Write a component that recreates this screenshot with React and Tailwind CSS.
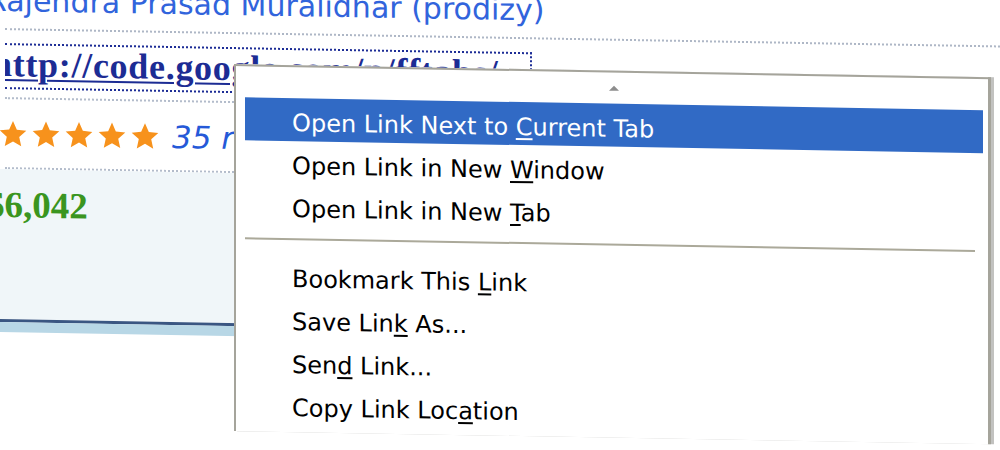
import React from "react";

function Star() {
  return (
    <svg width="28" height="27" viewBox="0 0 24 23" className="shrink-0">
      <polygon
        points="12,0.5 15.29,7.97 23.41,8.79 17.33,14.23 19.05,22.21 12,18.1 4.95,22.21 6.67,14.23 0.59,8.79 8.71,7.97"
        fill="#f7921c"
      />
    </svg>
  );
}

function Item({ children, active }) {
  return (
    <div
      className={
        "h-[43px] pt-[7px] pl-[47px] leading-[36px] whitespace-nowrap " +
        (active ? "bg-[#316ac5] text-white" : "text-black")
      }
    >
      {children}
    </div>
  );
}

export default function App() {
  return (
    <div className="w-[1000px] h-[450px] overflow-hidden bg-white relative">
      <div className="relative w-full h-full origin-top-left skew-y-[1deg]">
        {/* page content */}
        <div className="flex flex-col">
          <div
            className="-mt-[14px] h-[30px] -ml-[14px] text-[30px] leading-[30px] text-[#3164dc] whitespace-nowrap"
            style={{ fontFamily: '"DejaVu Sans", sans-serif' }}
          >
            Rajendra Prasad Muralidhar (prodizy)
          </div>
          <div className="mt-[12px] ml-[5px] w-[995px] border-t-2 border-dotted border-[#aeb7c6]" />
          <div className="mt-[13px] ml-[5px] w-[527px] h-[46px] border-t-2 border-b-2 border-r-2 border-dotted border-[#1d2d96] overflow-hidden">
            <div
              className="mt-[1px] -ml-[13px] text-[36px] leading-[36px] font-bold tracking-[0.7px] text-[#1c2c94] underline decoration-2 underline-offset-[3px] whitespace-nowrap"
              style={{ fontFamily: '"Liberation Serif", serif' }}
            >
              http://code.google.com/p/fftabs/
            </div>
          </div>
          <div className="mt-[8px] ml-[5px] w-[700px] border-t-2 border-dotted border-[#b3bccb]" />
          <div className="mt-[20px] h-[28px] -ml-[1px] flex items-center">
            <div className="flex gap-[5px]">
              <Star />
              <Star />
              <Star />
              <Star />
              <Star />
            </div>
            <div
              className="ml-[13px] mt-[2px] text-[31px] leading-[31px] italic text-[#2559d8] whitespace-nowrap"
              style={{ fontFamily: '"DejaVu Sans", sans-serif' }}
            >
              35 reviews
            </div>
          </div>
          <div className="mt-[20px] ml-[5px] w-[700px] border-t-2 border-dotted border-[#b3bccb]" />
          <div className="w-[700px] h-[150px] bg-[#f0f6f9]">
            <div
              className="mt-[17px] -ml-[14px] text-[37px] leading-[37px] font-bold text-[#3a9520]"
              style={{ fontFamily: '"Liberation Serif", serif' }}
            >
              $6,042
            </div>
          </div>
          <div className="w-[700px] h-[3px] bg-[#3a5682]" />
          <div className="w-[700px] h-[10px] bg-[#b8d7e6]" />
        </div>

        {/* context menu overlay */}
        <div
          className="absolute left-[234px] top-[60px] w-[757px] bg-white border-l-2 border-t-2 border-r-[3px] border-[#a5a49b] shadow-[3px_0_0_#c2c2c0] pl-[9px] pr-[5px] pb-[6px] text-[24px]"
          style={{ fontFamily: '"DejaVu Sans", sans-serif' }}
        >
          <div className="h-[31px] flex items-center justify-center">
            <div className="w-0 h-0 border-l-[5px] border-r-[5px] border-b-[5px] border-l-transparent border-r-transparent border-b-[#8d8d8d]" />
          </div>
          <Item active>
            Open Link Next to <u className="underline-offset-[3px]">C</u>urrent Tab
          </Item>
          <Item>
            Open Link in New <u className="underline-offset-[3px]">W</u>indow
          </Item>
          <Item>
            Open Link in New <u className="underline-offset-[3px]">T</u>ab
          </Item>
          <div className="h-[27px] pt-[11px]">
            <div className="w-[730px] h-[2px] bg-[#aba99a]" />
          </div>
          <Item>
            Bookmark This <u className="underline-offset-[3px]">L</u>ink
          </Item>
          <Item>
            Save Lin<u className="underline-offset-[3px]">k</u> As...
          </Item>
          <Item>
            Sen<u className="underline-offset-[3px]">d</u> Link...
          </Item>
          <Item>
            Copy Link Loc<u className="underline-offset-[3px]">a</u>tion
          </Item>
        </div>
      </div>
    </div>
  );
}
